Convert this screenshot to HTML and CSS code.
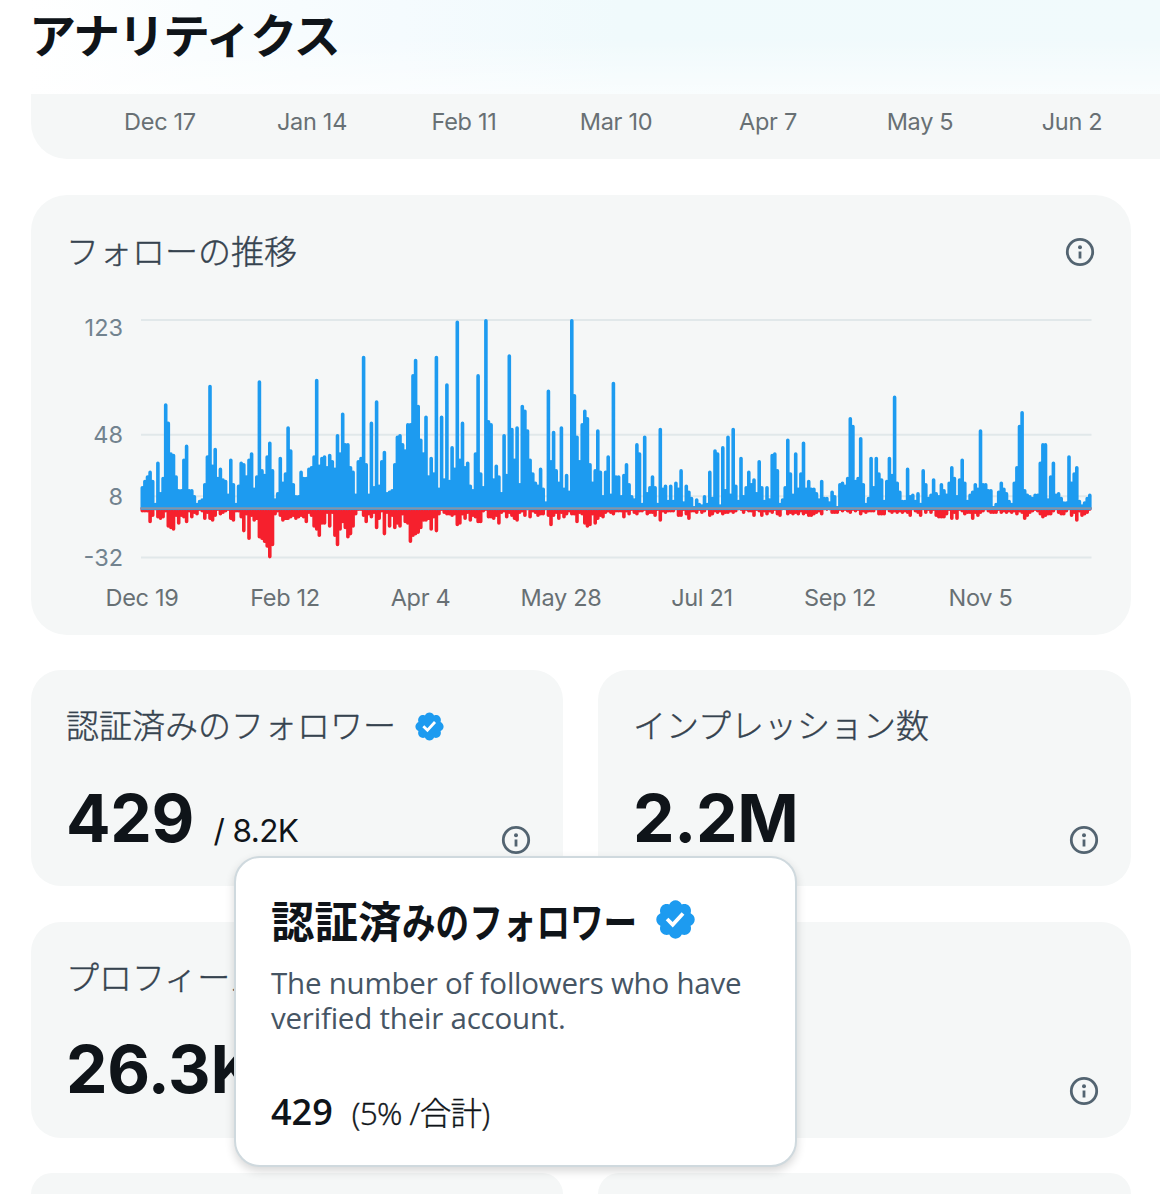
FILE: index.html
```
<!DOCTYPE html>
<html lang="ja">
<head>
  <meta charset="UTF-8">
  <meta name="viewport" content="width=device-width, initial-scale=1.0">
  <title>アナリティクス</title>
  <link rel="stylesheet" href="styles.css">
</head>
<body>

<!-- Shared icons -->
<svg class="icon-defs" aria-hidden="true">
  <symbol id="icon-info" viewBox="0 0 30 30">
    <circle cx="15" cy="15" r="12.7" fill="none" stroke="currentColor" stroke-width="2.8"/>
    <circle cx="15" cy="10.2" r="2" fill="currentColor"/>
    <path d="M13.6 14.5h2.8v7h-2.8z" fill="currentColor"/>
  </symbol>
  <symbol id="icon-verified" viewBox="0 0 24 24">
    <path fill="currentColor" d="M22.25 12c0-1.43-.88-2.67-2.19-3.34.46-1.39.2-2.9-.81-3.91s-2.52-1.27-3.91-.81c-.66-1.31-1.91-2.19-3.34-2.19s-2.67.88-3.33 2.19c-1.4-.46-2.91-.2-3.92.81s-1.26 2.52-.8 3.91c-1.31.67-2.2 1.91-2.2 3.34s.89 2.67 2.2 3.34c-.46 1.39-.21 2.9.8 3.91s2.52 1.26 3.91.81c.67 1.31 1.91 2.19 3.34 2.19s2.68-.88 3.34-2.19c1.39.45 2.9.2 3.91-.81s1.27-2.52.81-3.91c1.31-.67 2.19-1.91 2.19-3.34z"/>
    <path fill="#fff" d="M10.54 16.2L6.8 12.46l1.41-1.42 2.26 2.26 4.8-5.23 1.47 1.36-6.2 6.77z"/>
  </symbol>
</svg>

<header class="page-header">
  <h1>アナリティクス</h1>
</header>

<main class="content">
  <section class="previous-chart">
    <span>Dec 17</span>
    <span>Jan 14</span>
    <span>Feb 11</span>
    <span>Mar 10</span>
    <span>Apr 7</span>
    <span>May 5</span>
    <span>Jun 2</span>
  </section>

  <section class="card chart-card">
    <div class="card-header">
      <h2 class="card-title">フォローの推移</h2>
      <svg class="info-icon"><use href="#icon-info"/></svg>
    </div>
    <svg class="chart" id="followChart" width="1100" height="339" viewBox="31 295 1100 339"></svg>
  </section>

  <section class="stats">
    <div class="card stat">
      <h2 class="card-title">認証済みのフォロワー <svg class="verified-icon"><use href="#icon-verified"/></svg></h2>
      <div class="stat-row">
        <p class="stat-value">429 <small>/ 8.2K</small></p>
        <svg class="info-icon"><use href="#icon-info"/></svg>
      </div>

      <!-- Tooltip -->
      <div class="tooltip">
        <h3 class="tooltip-title"><span>認証済</span><span class="kana">みのフォロワー</span><svg class="verified-icon"><use href="#icon-verified"/></svg></h3>
        <p class="tooltip-text">The number of followers who have<br>verified their account.</p>
        <p class="tooltip-value"><strong>429</strong><span>(5% /合計)</span></p>
      </div>
    </div>
    <div class="card stat">
      <h2 class="card-title">インプレッション数</h2>
      <div class="stat-row">
        <p class="stat-value">2.2M</p>
        <svg class="info-icon"><use href="#icon-info"/></svg>
      </div>
    </div>
    <div class="card stat">
      <h2 class="card-title">プロフィール</h2>
      <div class="stat-row">
        <p class="stat-value">26.3K</p>
        <svg class="info-icon"><use href="#icon-info"/></svg>
      </div>
    </div>
    <div class="card stat">
      <h2 class="card-title"></h2>
      <div class="stat-row">
        <p class="stat-value"></p>
        <svg class="info-icon"><use href="#icon-info"/></svg>
      </div>
    </div>
    <div class="card stat-cut"></div>
    <div class="card stat-cut"></div>
  </section>
</main>

<script src="chart.js"></script>
</body>
</html>
```
FILE: styles.css
```
* {
  box-sizing: border-box;
}

body {
  margin: 0;
  height: 1194px;
  overflow: hidden;
  background: #fff;
  color: #0f1419;
  font-family: Inter, "Noto Sans CJK JP", sans-serif;
}

h1, h2, h3, p {
  margin: 0;
}

.icon-defs {
  display: none;
}

/* Header */
.page-header {
  height: 94px;
  padding-left: 29px;
  background: linear-gradient(to bottom, rgba(255, 255, 255, 0) 40%, rgba(255, 255, 255, 0.6)),
    linear-gradient(to right, #fff 30px, #f9fdfe 200px, #f5fbfe 400px, #f0fafc 620px, #f1fafc 100%);
}

.page-header h1 {
  font-size: 47px;
  line-height: 72px;
  font-weight: 700;
  letter-spacing: -2px;
  white-space: nowrap;
}

.content {
  padding-left: 31px;
}

/* Bottom of the chart above, cut off by the header */
.previous-chart {
  display: flex;
  height: 64.5px;
  padding-left: 53px;
  background: #f5f7f7;
  border-bottom-left-radius: 36px;
  color: #687074;
  font-size: 23.5px;
  line-height: 55px;
  letter-spacing: -0.3px;
}

.previous-chart span {
  width: 152px;
  flex: none;
  text-align: center;
}

/* Cards */
.card {
  background: #f5f7f7;
  border-radius: 30px;
}

.chart-card {
  width: 1100px;
  height: 439.5px;
  margin-top: 36.5px;
  border-radius: 36px;
}

.card-header {
  display: flex;
  justify-content: space-between;
  align-items: center;
  height: 100px;
  padding: 13px 36px 0 35px;
}

.card-title {
  color: #36434f;
  font-size: 33px;
  line-height: 48px;
  font-weight: 300;
  -webkit-text-stroke: 0.4px #36434f;
  white-space: nowrap;
}

.info-icon {
  width: 30px;
  height: 30px;
  flex: none;
  color: #536471;
}

.verified-icon {
  width: 33px;
  height: 33px;
  flex: none;
  color: #1d9bf0;
}

/* Chart */
.chart {
  display: block;
}

.grid-line {
  stroke: #e1e8ea;
  stroke-width: 2;
}

.zero-line {
  stroke: #8295aa;
  stroke-width: 2.2;
}

.bars {
  fill: none;
  stroke-width: 3.6;
  stroke-linecap: round;
}

.bars-gain {
  stroke: #1d9bf0;
}

.bars-loss {
  stroke: #f6202d;
}

.axis-y {
  fill: #72838f;
  font-size: 23.5px;
  text-anchor: end;
}

.axis-x {
  fill: #687074;
  font-size: 23.5px;
  letter-spacing: -0.3px;
  text-anchor: middle;
}

/* Stats */
.stats {
  display: grid;
  grid-template-columns: 532px 533px;
  grid-template-rows: 216px 216px 21px;
  gap: 35.5px 35px;
  margin-top: 35.5px;
}

.stat {
  position: relative;
  padding: 32px 32px 0 35px;
}

/* Last row runs under the bottom of the window */
.stat-cut {
  border-radius: 30px 30px 0 0;
}

.stat .card-title {
  height: 48px;
}

.stat .card-title .verified-icon {
  margin-left: 8px;
  vertical-align: -5px;
}

.stat-row {
  display: flex;
  justify-content: space-between;
  align-items: flex-end;
  height: 104.5px;
}

.stat-value {
  height: 79px;
  font-size: 66px;
  line-height: 84px;
  font-weight: 700;
  letter-spacing: -0.3px;
  white-space: nowrap;
}

.stat-value small {
  margin-left: 4px;
  font-size: 31.5px;
  font-weight: 400;
  letter-spacing: -0.6px;
}

/* Tooltip */
.tooltip {
  position: absolute;
  top: 186px;
  left: 203px;
  z-index: 10;
  width: 563px;
  height: 311px;
  padding: 31px 35px;
  background: #fff;
  border: 2px solid #cfd9de;
  border-radius: 26px;
  box-shadow: 0 4px 10px rgba(0, 0, 0, 0.16);
}

.tooltip-title {
  display: flex;
  align-items: center;
  height: 60px;
  font-size: 43.5px;
  font-weight: 700;
  white-space: nowrap;
}

.tooltip-title .kana {
  width: 236px;
  font-size: 42px;
  transform: scaleX(0.8);
  transform-origin: left;
}

.tooltip-title .verified-icon {
  width: 45px;
  height: 45px;
  margin-left: 15px;
}

.tooltip-text {
  margin-top: 16px;
  color: #465564;
  font-family: "Open Sans", sans-serif;
  font-size: 29.5px;
  line-height: 35px;
  letter-spacing: -0.22px;
  white-space: nowrap;
}

.tooltip-value {
  display: flex;
  align-items: baseline;
  gap: 19px;
  margin-top: 54px;
  font-family: "Open Sans", "Noto Sans CJK JP", sans-serif;
  font-size: 31.5px;
  line-height: 46px;
}

.tooltip-value strong {
  font-size: 36px;
  font-weight: 600;
}

.tooltip-value span {
  font-weight: 300;
  letter-spacing: -0.6px;
  -webkit-text-stroke: 0.4px #0f1419;
}
```
FILE: chart.js
```
// New follows per day
const gains = [
  14, 18, 21, 24, 18, 3, 30, 10, 20, 68, 56, 36, 35, 21, 12, 12, 32, 41, 12, 12,
  8, 3, 5, 6, 16, 34, 80, 28, 39, 20, 26, 19, 18, 9, 32, 16, 3, 15, 30, 29,
  21, 32, 36, 13, 21, 83, 25, 22, 34, 43, 25, 6, 10, 33, 17, 23, 53, 38, 16, 8,
  8, 24, 20, 20, 26, 27, 34, 84, 28, 33, 34, 27, 35, 31, 26, 48, 36, 62, 42, 42,
  27, 24, 9, 31, 33, 99, 29, 9, 56, 14, 70, 15, 31, 37, 10, 11, 12, 29, 47, 48,
  42, 38, 55, 55, 87, 97, 67, 45, 36, 60, 21, 33, 23, 99, 13, 60, 19, 81, 18, 40,
  26, 122, 32, 56, 27, 30, 15, 12, 36, 87, 23, 14, 123, 57, 55, 19, 28, 21, 10, 48,
  22, 100, 52, 32, 53, 16, 67, 64, 51, 32, 23, 17, 15, 26, 13, 4, 77, 31, 50, 25,
  17, 53, 13, 22, 11, 123, 74, 47, 31, 55, 64, 59, 29, 17, 25, 51, 24, 8, 24, 34,
  9, 82, 21, 21, 8, 22, 29, 16, 8, 6, 42, 36, 3, 47, 10, 14, 21, 14, 3, 52,
  13, 15, 5, 15, 5, 17, 13, 25, 4, 15, 11, 7, 1, 6, 3, 2, 8, 3, 24, 7,
  38, 36, 2, 40, 12, 47, 9, 52, 15, 5, 33, 8, 14, 24, 16, 19, 10, 31, 14, 5,
  14, 6, 35, 36, 25, 3, 6, 14, 45, 23, 9, 36, 13, 23, 43, 13, 18, 13, 13, 10,
  6, 18, 7, 7, 4, 11, 8, 1, 16, 17, 15, 20, 59, 54, 18, 20, 46, 16, 3, 7,
  33, 14, 33, 23, 19, 5, 18, 33, 22, 73, 17, 11, 5, 5, 26, 8, 9, 5, 10, 3,
  25, 16, 7, 9, 19, 10, 8, 16, 12, 9, 17, 27, 20, 8, 19, 32, 17, 5, 9, 11,
  16, 13, 51, 16, 16, 12, 12, 1, 3, 11, 17, 13, 10, 5, 3, 17, 27, 54, 63, 12,
  9, 8, 7, 9, 9, 30, 42, 42, 6, 21, 30, 9, 10, 7, 4, 4, 34, 17, 23, 27,
  5, 2, 4, 7, 9
];

// Unfollows per day
const losses = [
  2, 2, 2, 9, 5, 0, 6, 7, 6, 2, 12, 13, 14, 5, 10, 5, 6, 9, 2, 6,
  3, 4, 1, 2, 7, 3, 7, 8, 5, 1, 4, 3, 2, 1, 7, 8, 2, 2, 6, 15,
  4, 20, 5, 8, 7, 19, 20, 22, 25, 32, 24, 4, 2, 5, 8, 7, 7, 6, 5, 7,
  6, 5, 6, 9, 3, 5, 12, 14, 18, 10, 10, 3, 12, 3, 18, 24, 14, 9, 13, 19,
  17, 12, 4, 1, 1, 5, 9, 4, 6, 3, 13, 7, 2, 17, 3, 12, 5, 13, 10, 12,
  4, 9, 10, 22, 18, 17, 16, 13, 8, 8, 7, 14, 6, 15, 4, 1, 3, 4, 4, 5,
  4, 11, 10, 4, 7, 3, 8, 5, 6, 9, 9, 2, 1, 6, 6, 7, 5, 10, 3, 2,
  6, 3, 5, 7, 8, 3, 2, 5, 0, 6, 2, 3, 5, 4, 4, 0, 5, 11, 5, 3,
  7, 3, 6, 4, 2, 4, 4, 9, 3, 4, 10, 12, 11, 4, 10, 7, 5, 6, 3, 2,
  3, 4, 2, 2, 2, 6, 2, 4, 1, 3, 4, 2, 2, 1, 4, 3, 3, 5, 1, 8,
  2, 3, 2, 2, 2, 0, 5, 5, 1, 4, 7, 2, 2, 3, 1, 3, 2, 0, 5, 4,
  2, 3, 2, 4, 3, 3, 2, 3, 2, 0, 1, 3, 1, 2, 2, 5, 1, 2, 5, 2,
  4, 2, 3, 1, 4, 5, 0, 0, 4, 3, 4, 3, 4, 2, 4, 3, 5, 5, 4, 3,
  2, 4, 0, 1, 0, 3, 3, 3, 1, 2, 1, 2, 3, 1, 2, 1, 4, 2, 3, 2,
  2, 2, 0, 4, 4, 4, 0, 2, 3, 2, 3, 2, 3, 2, 3, 5, 0, 2, 3, 5,
  0, 3, 1, 3, 1, 5, 6, 6, 6, 4, 1, 7, 3, 7, 1, 2, 4, 3, 3, 7,
  3, 5, 3, 2, 0, 2, 3, 3, 3, 1, 3, 2, 3, 2, 3, 2, 4, 2, 3, 7,
  5, 3, 2, 1, 2, 4, 6, 5, 4, 4, 2, 0, 3, 4, 4, 2, 0, 5, 3, 8,
  2, 5, 4, 3, 1
];

const chart = document.getElementById("followChart");
const left = 142.3;
const step = 2.603;
const zero = 508.4;
const unit = 1.532;

function y(value) {
  return zero - value * unit;
}

// One path for all bars of a series, pulled in a little for the round caps
function bars(values, sign) {
  return values.map((v, i) => {
    const x = (left + i * step).toFixed(1);
    return `M${x} ${zero}V${(y(v * sign) + 0.8 * sign).toFixed(1)}`;
  }).join("");
}

let svg = "";
for (const tick of [123, 48, 8, -32]) {
  svg += `<line class="grid-line" x1="141" x2="1091.5" y1="${y(tick)}" y2="${y(tick)}"/>`;
  svg += `<text class="axis-y" x="123" y="${y(tick) + (tick === 123 ? 16 : 8.5)}">${tick}</text>`;
}

svg += `<path class="bars bars-loss" d="${bars(losses, -1)}"/>`;
svg += `<path class="bars bars-gain" d="${bars(gains, 1)}"/>`;
svg += `<line class="zero-line" x1="140.5" x2="1091.5" y1="${zero}" y2="${zero}"/>`;

const ticks = [["Dec 19", 142], ["Feb 12", 285], ["Apr 4", 420.5], ["May 28", 561], ["Jul 21", 702], ["Sep 12", 840], ["Nov 5", 980.5]];
for (const [label, x] of ticks) {
  svg += `<text class="axis-x" x="${x}" y="606">${label}</text>`;
}

chart.innerHTML = svg;
```
